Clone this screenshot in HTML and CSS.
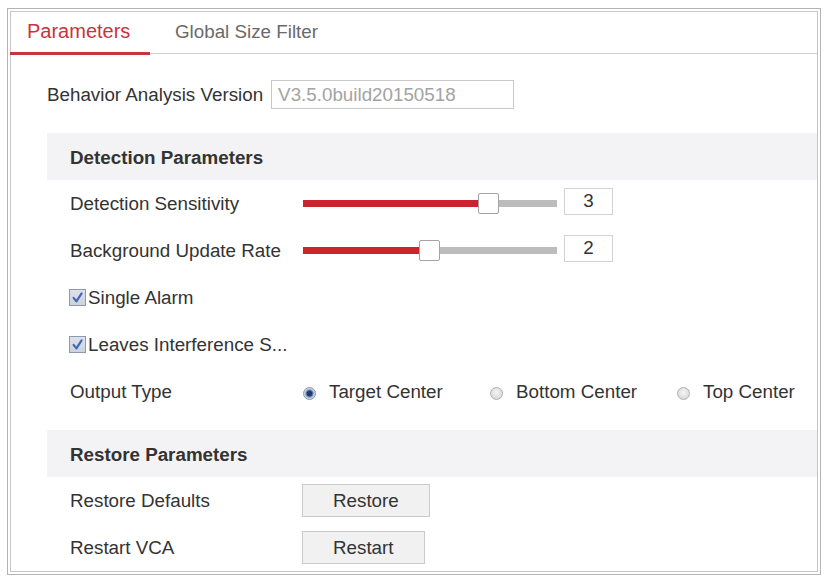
FILE: index.html
```html
<!DOCTYPE html>
<html lang="en">
<head>
<meta charset="utf-8">
<title>Parameters</title>
<link rel="stylesheet" href="styles.css">
</head>
<body>
<div class="frame">
  <div class="tabs">
    <div class="tab active">Parameters</div>
    <div class="tab">Global Size Filter</div>
  </div>
  <div class="content">
    <div class="version-row">
      <span class="version-label">Behavior Analysis Version</span>
      <div class="version-box">V3.5.0build20150518</div>
    </div>

    <div class="section">
      <div class="band">Detection Parameters</div>
      <div class="row">
        <div class="label">Detection Sensitivity</div>
        <div class="slider">
          <div class="track"><div class="fill" style="width:176px"></div></div>
          <div class="thumb" style="left:176px"></div>
        </div>
        <div class="num">3</div>
      </div>
      <div class="row">
        <div class="label">Background Update Rate</div>
        <div class="slider">
          <div class="track"><div class="fill" style="width:117px"></div></div>
          <div class="thumb" style="left:117px"></div>
        </div>
        <div class="num">2</div>
      </div>
      <div class="row">
        <label class="check"><span class="box"><svg viewBox="0 0 16 16" width="15" height="15"><path d="M3.8 8.4 L6.8 12.2 L12.4 3.6" fill="none" stroke="#3f67b3" stroke-width="2.2" stroke-linecap="round" stroke-linejoin="round"/></svg></span>Single Alarm</label>
      </div>
      <div class="row">
        <label class="check"><span class="box"><svg viewBox="0 0 16 16" width="15" height="15"><path d="M3.8 8.4 L6.8 12.2 L12.4 3.6" fill="none" stroke="#3f67b3" stroke-width="2.2" stroke-linecap="round" stroke-linejoin="round"/></svg></span>Leaves Interference S...</label>
      </div>
      <div class="row">
        <div class="label">Output Type</div>
        <div class="radios">
          <div class="option"><span class="radio on"></span>Target Center</div>
          <div class="option"><span class="radio"></span>Bottom Center</div>
          <div class="option"><span class="radio"></span>Top Center</div>
        </div>
      </div>
    </div>

    <div class="section second">
      <div class="band">Restore Parameters</div>
      <div class="row">
        <div class="label">Restore Defaults</div>
        <div class="btn">Restore</div>
      </div>
      <div class="row">
        <div class="label">Restart VCA</div>
        <div class="btn">Restart</div>
      </div>
    </div>
  </div>
</div>
</body>
</html>
```

FILE: styles.css
```css
* { box-sizing: border-box; }

html, body {
  margin: 0;
  padding: 0;
  background: #ffffff;
}

body {
  font-family: "Liberation Sans", Arial, sans-serif;
  font-size: 18.8px;
  color: #333333;
}

.frame {
  margin: 8px 0 0 7px;
  width: 814px;
  height: 567px;
  border: 1px solid #b3b3b3;
  box-shadow: inset 0 0 0 2px #ffffff, inset 0 0 0 3px #c6c6c6;
  padding: 2px 3px 3px 2px;
  overflow: hidden;
}

.tabs {
  display: flex;
  height: 43px;
  border-bottom: 1px solid #d0d0d0;
}

.tab {
  display: flex;
  align-items: center;
  height: 43px;
  padding: 0 0 2px 25px;
  color: #6a6a6a;
}

.tab.active {
  width: 140px;
  padding-left: 17px;
  font-size: 20px;
  color: #c8343d;
  border-bottom: 3px solid #c8343d;
  margin-bottom: -1px;
  height: 44px;
  padding-top: 1px;
}

.content {
  padding-left: 37px;
}

.version-row {
  display: flex;
  align-items: center;
  margin-top: 26px;
  height: 29px;
}

.version-label {
  margin-right: 8px;
}

.version-box {
  width: 243px;
  height: 29px;
  border: 1px solid #c9c9c9;
  color: #a3a3a3;
  padding-left: 6px;
  display: flex;
  align-items: center;
}

.section {
  margin-top: 24px;
}

.section.second {
  margin-top: 15px;
}

.band {
  height: 47px;
  background: #f3f2f4;
  padding-left: 23px;
  display: flex;
  align-items: center;
  font-weight: bold;
  padding-top: 2px;
}

.row {
  height: 47px;
  display: flex;
  align-items: center;
  padding-left: 23px;
}

.label {
  width: 232px;
  flex: none;
}

.slider {
  position: relative;
  width: 255px;
  height: 21px;
  display: flex;
  align-items: center;
  flex: none;
}

.track {
  margin-left: 1px;
  width: 254px;
  height: 7px;
  background: #bcbcbc;
}

.fill {
  height: 7px;
  background: #c8262f;
}

.thumb {
  position: absolute;
  top: 0;
  width: 21px;
  height: 21px;
  background: #ffffff;
  border: 1px solid #a3a3a3;
  border-radius: 2px;
}

.num {
  margin-left: 7px;
  width: 49px;
  height: 27px;
  border: 1px solid #d3d3d3;
  display: flex;
  align-items: center;
  justify-content: center;
  margin-bottom: 5px;
}

.check {
  display: flex;
  align-items: center;
}

.box {
  width: 17px;
  height: 17px;
  margin: 0 2px 0 -1px;
  border: 1px solid #8f99ad;
  background: linear-gradient(#dde1eb, #cdd2df);
  display: flex;
  align-items: center;
  justify-content: center;
}

.radios {
  display: grid;
  grid-template-columns: 187px 187px auto;
}

.option {
  display: flex;
  align-items: center;
}

.radio {
  width: 13px;
  height: 13px;
  margin: 0 13px 0 1px;
  border-radius: 50%;
  border: 1px solid #b0b0b0;
  background: radial-gradient(circle at 50% 40%, #f4f4f4, #d2d2d2);
  position: relative;
  top: 2px;
}

.radio.on {
  border-color: #8796ae;
  background: radial-gradient(circle, #1f3c6c 0 2.5px, #7d95bb 3.5px, #c9d4e6 5px, #eef1f6 6.5px);
}

.btn {
  height: 33px;
  padding: 0 30px;
  background: #f1f1f1;
  border: 1px solid #cacaca;
  display: flex;
  align-items: center;
  justify-content: center;
}
```
